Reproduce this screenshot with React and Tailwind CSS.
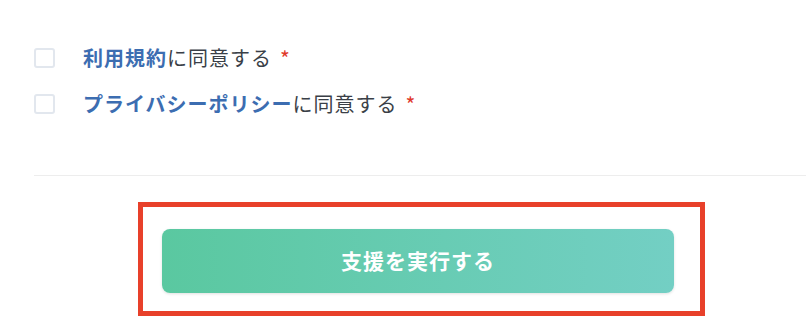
const Agreement = ({ link }) => {
  return (
    <label className="flex items-center h-[20px]">
      <span className="w-[21px] h-[20px] rounded-[3px] border-2 border-[#e2e7ee] bg-white shrink-0" />
      <span className="ml-[28px] flex items-center text-[20px] tracking-[1px] leading-none text-[#3a3f47]">
        <a href="#" className="text-[#3c6db1] font-bold">
          {link}
        </a>
        に同意する
        <span className="ml-[8px] text-[21px] leading-none text-[#e0392b] relative top-[0px]">*</span>
      </span>
    </label>
  );
};

export default function App() {
  return (
    <div
      className="w-[806px] h-[328px] bg-white overflow-hidden"
      style={{ fontFamily: '"Noto Sans CJK JP", "Noto Sans", sans-serif' }}
    >
      <div className="pl-[34px] pt-[48px]">
        <div className="flex flex-col gap-[26px]">
          <Agreement link="利用規約" />
          <Agreement link="プライバシーポリシー" />
        </div>
        <hr className="mt-[61px] border-0 h-px bg-[#ededed]" />
      </div>
      <div className="ml-[138px] mt-[26px] w-[567px] h-[114px] border-[5px] border-[#e8402a] pl-[19px] pt-[22px]">
        <button className="w-[512px] h-[64px] rounded-[8px] bg-gradient-to-r from-[#5ac8a0] to-[#73cfc4] shadow-[0_1px_3px_rgba(0,0,0,0.12)] text-white font-bold text-[21px] tracking-[1px] flex items-center justify-center">
          支援を実行する
        </button>
      </div>
    </div>
  );
}
